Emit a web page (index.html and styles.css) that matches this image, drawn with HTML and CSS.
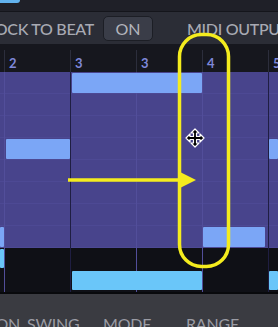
FILE: index.html
```html
<html>
    <head>
        <title>Piano Roll</title>
        <link rel="stylesheet" href="styles.css">
    </head>
    <body>
        <div class="topstrip"><div class="tab"></div></div>
        <div class="toolbar">
            <div class="slot end"><span class="label">LOCK TO BEAT</span></div>
            <div class="slot"><span class="toggle">ON</span></div>
            <div class="slot"><span class="label">MIDI OUTPUT</span></div>
        </div>

        <div class="ruler">
            <div class="mark c2">2</div>
            <div class="mark c3">3</div>
            <div class="mark c4">3</div>
            <div class="mark c5">4</div>
            <div class="mark c6">5</div>
        </div>

        <div class="roll">
            <!-- beat / bar lines -->
            <div class="vline beat c2"></div>
            <div class="vline bar c3"></div>
            <div class="vline beat c4"></div>
            <div class="vline beat c5"></div>
            <div class="vline bar c6"></div>

            <!-- notes -->
            <div class="note r1 span34"></div>
            <div class="note r4 c2"></div>
            <div class="note r4 c6"></div>
            <div class="note r8 c1"></div>
            <div class="note r8 c5 short"></div>
            <div class="note low r9 c1"></div>
            <div class="note low r10 span34"></div>
            <div class="note low r10 c6"></div>
        </div>

        <div class="params">
            <div class="slot end"><span class="plabel">DURATION</span></div>
            <div class="slot"><span class="plabel">SWING</span></div>
            <div class="slot"><span class="plabel">MODE</span></div>
            <div class="slot"><span class="plabel">RANGE</span></div>
        </div>

        <!-- annotation on top of the screenshot -->
        <svg class="overlay" width="278" height="327" viewBox="0 0 278 327">
            <rect x="179.5" y="34.5" width="49" height="232" rx="22" fill="none" stroke="#f4ec1e" stroke-width="3.5"/>
            <line x1="68" y1="180" x2="182" y2="180" stroke="#f4ec1e" stroke-width="3.5"/>
            <polygon points="178,171 196,180 178,189" fill="#f4ec1e"/>
            <path d="M195 129 l4 4 h-2.5 v3.5 h3.5 v-2.5 l4 4 -4 4 v-2.5 h-3.5 v3.5 h2.5 l-4 4 -4 -4 h2.5 v-3.5 h-3.5 v2.5 l-4 -4 4 -4 v2.5 h3.5 v-3.5 h-2.5 z"
                  fill="#000" stroke="#fff" stroke-width="1.2" stroke-linejoin="round"/>
        </svg>
    </body>
</html>
```

FILE: styles.css
```css
body{
    margin: 0;
    width: 278px;
    height: 327px;
    overflow: hidden;
    position: relative;
    background: #3a3b41;
    font-family: Lato, "Open Sans", sans-serif;
}
.topstrip{
    height: 11px;
    background: #1f2028;
    border-bottom: 1px solid #14151b;
}
.tab{
    width: 20px;
    height: 3px;
    background: #62b2ee;
    border-radius: 0 0 3px 0;
}

/* label slots: text that runs past the left edge stays right-aligned */
.slot{
    display: flex;
    align-items: center;
    white-space: nowrap;
    min-width: 0;
}
.slot.end{
    justify-content: flex-end;
}

.toolbar{
    height: 32px;
    background: #2b2d36;
    display: grid;
    grid-template-columns: 94px 93px 91px;
    overflow: hidden;
}
.toolbar .slot:nth-child(2){
    padding-left: 9px;
}
.label{
    flex-shrink: 0;
    color: #a8aab3;
    font-size: 16px;
    letter-spacing: -0.3px;
    font-weight: 500;
}
.toggle{
    flex-shrink: 0;
    width: 48px;
    height: 23px;
    line-height: 23px;
    text-align: center;
    color: #b3b5bd;
    font-size: 16px;
    background: #3a3d48;
    border: 1px solid #1c1e25;
    border-radius: 5px;
}

/* shared column layout: 4px lead-in, then beats of 66px */
.ruler, .roll{
    display: grid;
    grid-template-columns: 4px 66px 66px 66px 66px 10px;
}
.c1{ grid-column: 1; }
.c2{ grid-column: 2; }
.c3{ grid-column: 3; }
.c4{ grid-column: 4; }
.c5{ grid-column: 5; }
.c6{ grid-column: 6; }
.span34{ grid-column: 3 / 5; }

.ruler{
    height: 28px;
    background: #16171e;
}
.mark{
    grid-row: 1;
    color: #7f88d9;
    font-size: 13px;
    font-weight: bold;
    padding-left: 4px;
    padding-top: 7px;
    border-left: 1px solid #2c2e3c;
    margin-top: 6px;
    line-height: 12px;
    overflow: hidden;
}

.roll{
    grid-template-rows: repeat(10, 22px);
    background:
        linear-gradient(#0f1016, #0f1016) 0 176px / 100% 44px no-repeat,
        repeating-linear-gradient(#48448c 0 21px, #4d4994 21px 22px);
    border-bottom: 2px solid #08090c;
}
.vline{
    grid-row: 1 / -1;
    border-left: 1px solid #524e9a;
}
.vline.bar{
    border-left: 1px solid #1f1e42;
}
.r1{ grid-row: 1; }
.r4{ grid-row: 4; }
.r8{ grid-row: 8; }
.r9{ grid-row: 9; }
.r10{ grid-row: 10; }

.note{
    background: #7ba6f6;
    margin: 1px 0 1px 2px;
    border-radius: 1px;
}
.note.c1{ margin-left: 0; }
.note.c6{ margin-left: 1px; }
.note.short{ margin-right: 3px; margin-left: 1px; }
.note.low{
    background: #6ac6f9;
    margin-top: 1px;
    margin-bottom: 2px;
}

.params{
    display: grid;
    grid-template-columns: 20px 83px 83px 92px;
    padding-top: 20px;
    overflow: hidden;
}
.params .slot:nth-child(2){
    padding-left: 7px;
}
.plabel{
    flex-shrink: 0;
    color: #9b9ca4;
    font-size: 16px;
    letter-spacing: -0.2px;
}

.overlay{
    position: absolute;
    left: 0;
    top: 0;
}
```
